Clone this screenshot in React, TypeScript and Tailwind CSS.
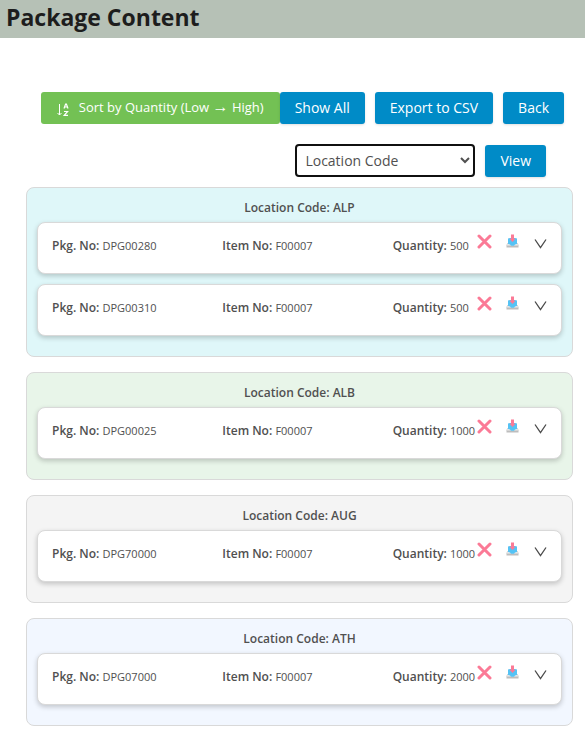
import { useState } from "react";

// --- Interfaces ---
interface PackageItem {
  pkgNo: string;
  itemNo: string;
  quantity: number;
}
interface LocationGroup {
  code: string;
  color: string;
  items: PackageItem[];
}

const groups: LocationGroup[] = [
  {
    code: "ALP",
    color: "bg-[#dff7f9]",
    items: [
      { pkgNo: "DPG00280", itemNo: "F00007", quantity: 500 },
      { pkgNo: "DPG00310", itemNo: "F00007", quantity: 500 },
    ],
  },
  {
    code: "ALB",
    color: "bg-[#e8f5e9]",
    items: [{ pkgNo: "DPG00025", itemNo: "F00007", quantity: 1000 }],
  },
  {
    code: "AUG",
    color: "bg-[#f4f4f4]",
    items: [{ pkgNo: "DPG70000", itemNo: "F00007", quantity: 1000 }],
  },
  {
    code: "ATH",
    color: "bg-[#f2f7ff]",
    items: [{ pkgNo: "DPG07000", itemNo: "F00007", quantity: 2000 }],
  },
];

const blueButton =
  "h-8 shrink-0 whitespace-nowrap rounded-[3px] bg-[#008bc7] px-[15px] text-sm text-white shadow-sm";

// --- Icons ---
function SortIcon() {
  return (
    <svg width="12" height="14" viewBox="0 0 12 14" fill="none" stroke="currentColor" aria-hidden="true">
      <path d="M2.5 1v11M0.5 10l2 2 2-2" />
      <path d="M7 5.5L8.6 1h.8L11 5.5M7.6 4h2.8" strokeWidth="1.2" />
      <path d="M7 8.5h3.6L7.2 12.4H11" strokeWidth="1.2" />
    </svg>
  );
}

function CrossIcon() {
  return (
    <svg width="15" height="15" viewBox="0 0 15 15" fill="none" stroke="#fb7a96" strokeWidth="3" strokeLinecap="round" aria-hidden="true">
      <path d="M2 2l11 11M13 2L2 13" />
    </svg>
  );
}

function InboxIcon() {
  return (
    <svg width="13" height="14" viewBox="0 0 13 14" aria-hidden="true">
      <path d="M1.5 9L0.5 11v2.5h12V11l-1-2z" fill="#bdbdbd" />
      <path d="M1.5 9.5h10L12 11.5H1z" fill="#eeeeee" />
      <path d="M2 4.5l2-.5h5l2 .5V10l-2 .5-1 1.2H5L4 10.5 2 10z" fill="#55c3f5" />
      <path d="M5 .5h3v4.2h1.5L6.5 8l-3-3.300H5z" fill="#fb7a96" />
    </svg>
  );
}

function ChevronIcon() {
  return (
    <svg width="13" height="17" viewBox="0 0 13 17" fill="none" stroke="#4a4a4a" strokeWidth="1.3" aria-hidden="true">
      <path d="M1 5.5l5.5 8L12 5.5" />
    </svg>
  );
}

// --- Package row ---
function Field({ label, value }: { label: string; value: string | number }) {
  return (
    <p className="whitespace-nowrap">
      <strong className="font-semibold">{label}:</strong>{" "}
      <span className="text-[11px]">{value}</span>
    </p>
  );
}

function PackageCard({ item }: { item: PackageItem }) {
  return (
    <li className="mb-2.5 grid grid-cols-3 gap-4 rounded-lg border border-[#d9d9d9] bg-white px-3.5 pt-[11px] pb-[15px] leading-6 shadow-[0_2px_5px_rgba(0,0,0,0.2)]">
      <Field label="Pkg. No" value={item.pkgNo} />
      <Field label="Item No" value={item.itemNo} />
      <div className="flex items-start">
        <div className="w-[84px] shrink-0">
          <Field label="Quantity" value={item.quantity} />
        </div>
        <div className="flex grow items-start justify-between">
          <button type="button" aria-label="Delete package">
            <CrossIcon />
          </button>
          <button type="button" aria-label="Pick package">
            <InboxIcon />
          </button>
          <button type="button" aria-label="Show details">
            <ChevronIcon />
          </button>
        </div>
      </div>
    </li>
  );
}

export default function App() {
  const [filter, setFilter] = useState("location");

  return (
    <div className="bg-white font-['Open_Sans','Noto_Sans',sans-serif] text-[#505050]">
      <header className="bg-[#b6c1b6] px-1.5 pb-1">
        <h1 className="text-[23px] leading-[34px] font-bold text-[#1d1d1d]">
          Package Content
        </h1>
      </header>

      <main className="px-3 pt-[54px] pb-3">
        <div className="flex justify-end gap-2.5 pr-[9px]">
          <div className="flex">
            <button
              type="button"
              className="flex h-8 shrink-0 items-center gap-2.5 whitespace-nowrap rounded-[3px] bg-[#73c154] px-4 text-[13px] text-white"
            >
              <span className="pt-1">
                <SortIcon />
              </span>
              <span>
                Sort by Quantity (Low <span className="text-base leading-4">→</span> High)
              </span>
            </button>
            <button type="button" className={blueButton}>
              Show All
            </button>
          </div>
          <button type="button" className={blueButton}>
            Export to CSV
          </button>
          <button type="button" className={blueButton}>
            Back
          </button>
        </div>

        <div className="mt-5 flex items-center justify-end gap-2.5 pr-[27px]">
          <select
            aria-label="Filter by"
            value={filter}
            onChange={(e) => setFilter(e.target.value)}
            className="h-[33px] w-[180px] rounded-[4px] border-2 border-[#101010] bg-white px-1 text-sm"
          >
            <option value="location">Location Code</option>
            <option value="package">Package No</option>
            <option value="item">Item No</option>
          </select>
          <button type="button" className={blueButton}>
            View
          </button>
        </div>

        <div className="mt-2.5 space-y-[15px] pl-3.5 text-xs leading-5">
          {groups.map((group) => (
            <section
              key={group.code}
              className={`rounded-lg border border-[#d9d9d9] p-2.5 ${group.color}`}
            >
              <h2 className="mb-1 text-center font-semibold">
                Location Code: {group.code}
              </h2>
              <ul>
                {group.items.map((item) => (
                  <PackageCard key={item.pkgNo} item={item} />
                ))}
              </ul>
            </section>
          ))}
        </div>
      </main>
    </div>
  );
}
